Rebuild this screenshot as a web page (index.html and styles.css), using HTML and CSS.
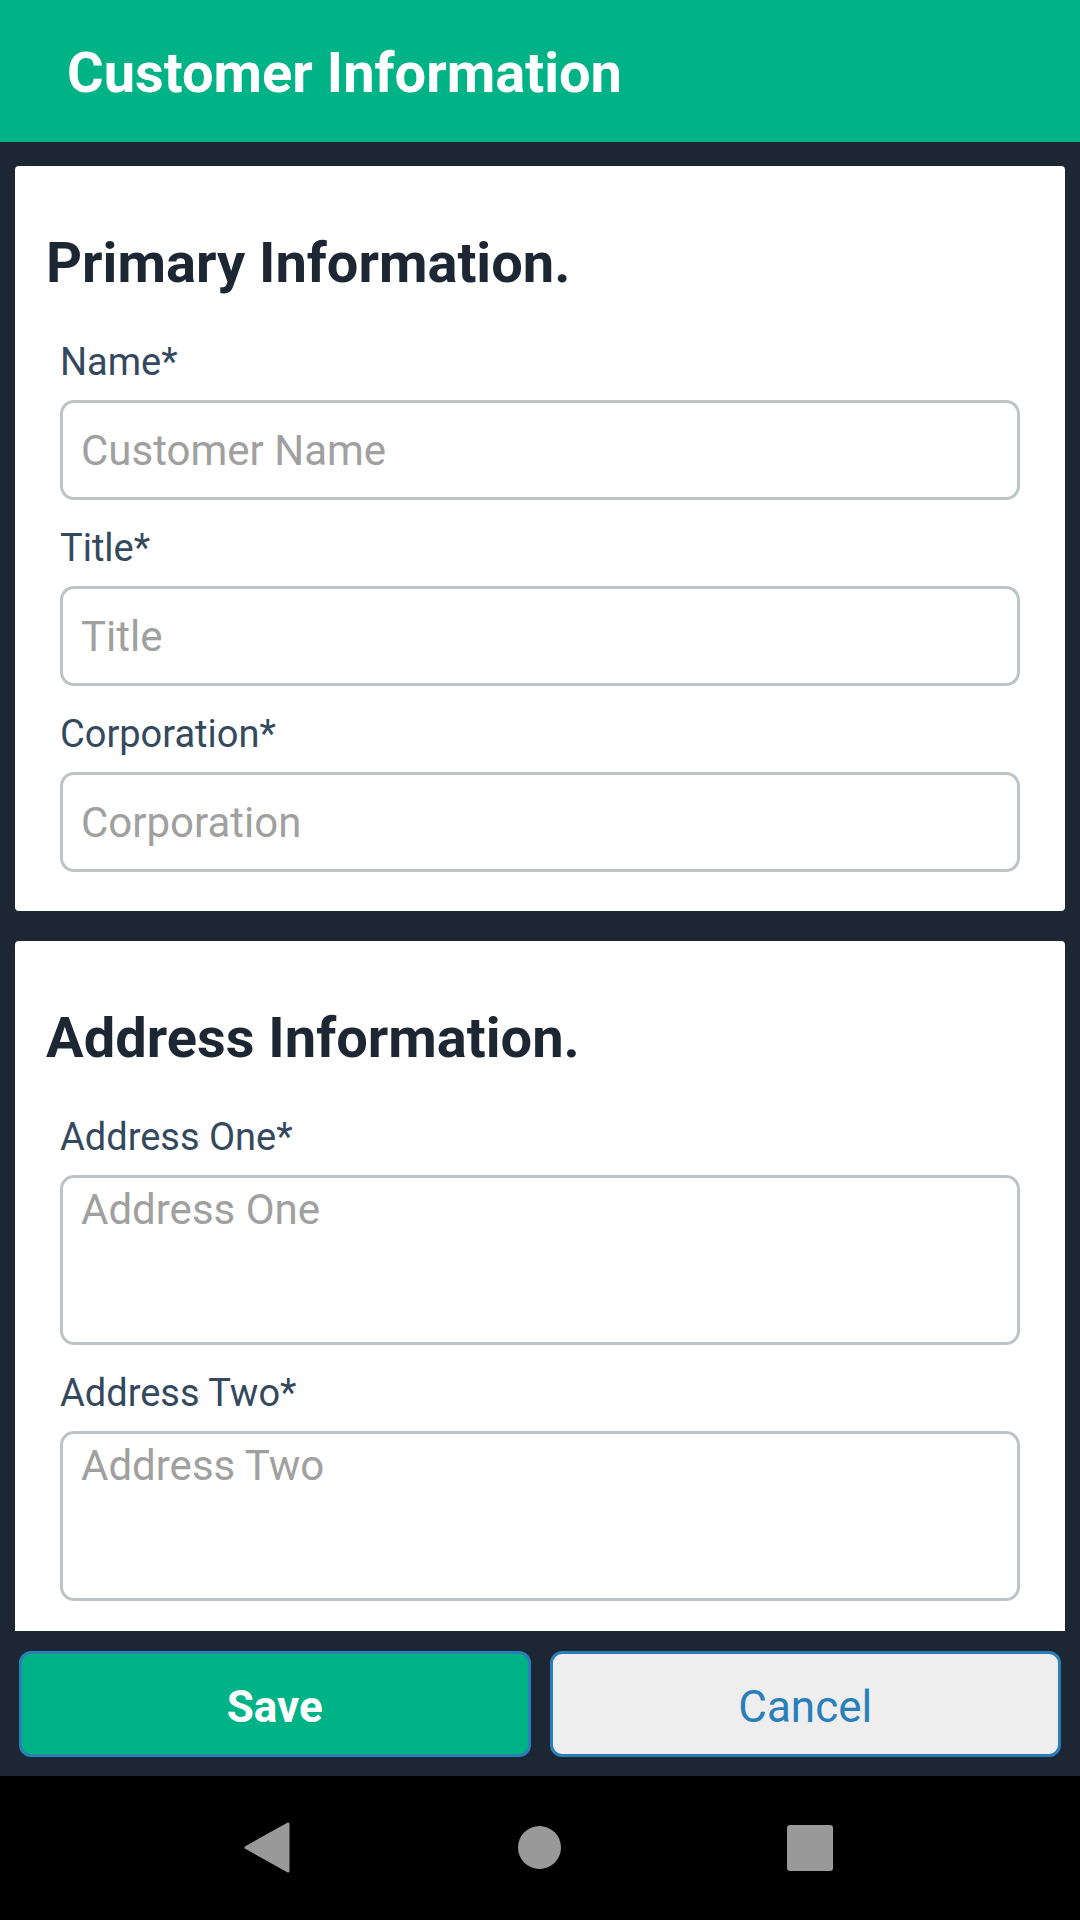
FILE: index.html
```html
<!DOCTYPE html>
<html>
<head>
<meta charset="utf-8">
<link rel="stylesheet" href="styles.css">
</head>
<body>
<div class="screen">
  <header class="appbar">
    <h1 class="appbar-title">Customer Information</h1>
  </header>
  <main class="content">
    <section class="card">
      <h2 class="card-title">Primary Information.</h2>
      <div class="field">
        <label class="field-label">Name*</label>
        <input class="field-input" type="text" placeholder="Customer Name">
      </div>
      <div class="field">
        <label class="field-label">Title*</label>
        <input class="field-input" type="text" placeholder="Title">
      </div>
      <div class="field">
        <label class="field-label">Corporation*</label>
        <input class="field-input" type="text" placeholder="Corporation">
      </div>
    </section>
    <section class="card">
      <h2 class="card-title">Address Information.</h2>
      <div class="field">
        <label class="field-label">Address One*</label>
        <textarea class="field-input field-area" placeholder="Address One"></textarea>
      </div>
      <div class="field">
        <label class="field-label">Address Two*</label>
        <textarea class="field-input field-area" placeholder="Address Two"></textarea>
      </div>
    </section>
  </main>
  <footer class="actions">
    <button class="btn btn-save">Save</button>
    <button class="btn btn-cancel">Cancel</button>
  </footer>
  <nav class="sysnav">
    <span class="nav-cell">
      <svg width="60" height="60" viewBox="0 0 60 60"><polygon points="50,6 50,53 8,29.5" fill="#999999" stroke="#999999" stroke-width="3" stroke-linejoin="round"/></svg>
    </span>
    <span class="nav-cell">
      <svg width="60" height="60" viewBox="0 0 60 60"><circle cx="29.5" cy="29.5" r="21.5" fill="#999999"/></svg>
    </span>
    <span class="nav-cell">
      <svg width="60" height="60" viewBox="0 0 60 60"><rect x="5" y="7" width="46" height="46" rx="3" fill="#999999"/></svg>
    </span>
  </nav>
</div>
</body>
</html>
```

FILE: styles.css
```css
* {
  box-sizing: border-box;
}

html, body {
  margin: 0;
  padding: 0;
  background: #000;
}

.screen {
  width: 1080px;
  height: 1920px;
  display: flex;
  flex-direction: column;
  font-family: Roboto, "Liberation Sans", sans-serif;
  overflow: hidden;
}

.appbar {
  height: 142px;
  flex: 0 0 142px;
  background: #00b386;
  display: flex;
  align-items: center;
  padding-left: 67px;
  padding-top: 4px;
}

.appbar-title {
  margin: 0;
  color: #ffffff;
  font-size: 56px;
  font-weight: 700;
  line-height: 66px;
}

.content {
  flex: 1 1 auto;
  min-height: 0;
  overflow: hidden;
  background: #1c2733;
  padding: 24px 15px 0;
  display: flex;
  flex-direction: column;
  gap: 30px;
}

.card {
  flex: 0 0 auto;
  background: #ffffff;
  border-radius: 4px;
  padding: 64px 45px 39px 45px;
  display: flex;
  flex-direction: column;
  gap: 26px;
}

.card-title {
  margin: 0 0 17px -14px;
  color: #1c2733;
  font-size: 56px;
  font-weight: 700;
  line-height: 67px;
}

.field {
  display: flex;
  flex-direction: column;
}

.field-label {
  display: block;
  color: #34495e;
  font-size: 38px;
  line-height: 44px;
  margin-bottom: 16px;
}

.field-input {
  display: block;
  width: 100%;
  height: 100px;
  margin: 0;
  border: 3px solid #bdc3c7;
  border-radius: 14px;
  background: #ffffff;
  padding: 0 18px;
  font-family: Roboto, "Liberation Sans", sans-serif;
  font-size: 42px;
  color: #333;
  outline: none;
}

.field-input::placeholder {
  color: #a0a0a0;
  opacity: 1;
}

.field-area {
  height: 170px;
  padding-top: 8px;
  resize: none;
  line-height: 48px;
}

.actions {
  flex: 0 0 145px;
  height: 145px;
  background: #1c2733;
  padding: 20px 19px 19px;
  display: grid;
  grid-template-columns: 1fr 1fr;
  gap: 19px;
}

.btn {
  margin: 0;
  border: 3px solid #2980b9;
  border-radius: 12px;
  font-family: Roboto, "Liberation Sans", sans-serif;
  font-size: 44px;
  height: 106px;
  padding: 5px 0 0;
}

.btn-save {
  background: #00b386;
  color: #ffffff;
  font-weight: 700;
}

.btn-cancel {
  background: #eeeeee;
  color: #2980b9;
  font-weight: 400;
}

.sysnav {
  flex: 0 0 144px;
  height: 144px;
  background: #000000;
  display: flex;
  justify-content: center;
  align-items: center;
}

.nav-cell {
  width: 272px;
  display: flex;
  justify-content: center;
  align-items: center;
}

.nav-cell svg {
  display: block;
}
```
